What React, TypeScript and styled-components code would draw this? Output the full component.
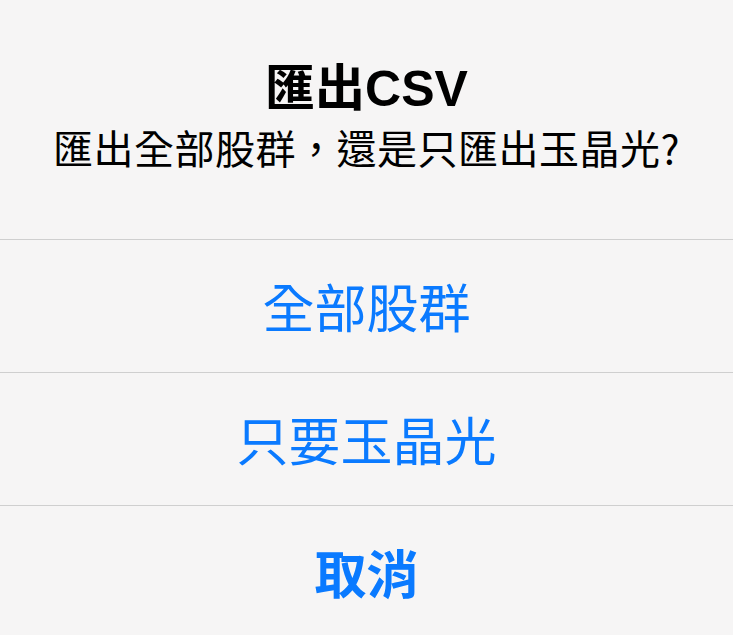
import React from 'react'
import styled, { createGlobalStyle } from 'styled-components'

const GlobalStyle = createGlobalStyle`
  html, body {
    margin: 0;
    padding: 0;
    background: #f6f5f5;
  }
  body {
    font-family: 'Liberation Sans', 'Noto Sans CJK TC', sans-serif;
    -webkit-font-smoothing: antialiased;
  }
`

const Alert = styled.div`
  width: 733px;
  height: 635px;
  overflow: hidden;
  background: #f6f5f5;
  display: flex;
  flex-direction: column;
`

const Header = styled.div`
  height: 239px;
  flex: none;
  box-sizing: border-box;
  padding-top: 57px;
  display: flex;
  flex-direction: column;
  align-items: center;
`

const Title = styled.div`
  font-size: 50px;
  font-weight: 700;
  line-height: 64px;
  color: #000;
`

const Message = styled.div`
  font-family: 'Noto Sans CJK TC', sans-serif;
  font-size: 40px;
  letter-spacing: 0.5px;
  line-height: 52px;
  color: #000;
`

const Action = styled.button<{ $bold?: boolean }>`
  height: 133px;
  flex: none;
  box-sizing: border-box;
  border: 0;
  border-top: 1px solid #cfcfcf;
  background: transparent;
  padding: 0 0 2px;
  font-family: 'Noto Sans CJK TC', sans-serif;
  font-size: 52px;
  font-weight: ${({ $bold }) => ($bold ? 700 : 400)};
  color: #0a7aff;
  display: flex;
  align-items: center;
  justify-content: center;
  cursor: pointer;
`

export default function App() {
  return (
    <>
      <GlobalStyle />
      <Alert>
        <Header>
          <Title>匯出CSV</Title>
          <Message>匯出全部股群，還是只匯出玉晶光?</Message>
        </Header>
        <Action>全部股群</Action>
        <Action>只要玉晶光</Action>
        <Action $bold>取消</Action>
      </Alert>
    </>
  )
}
